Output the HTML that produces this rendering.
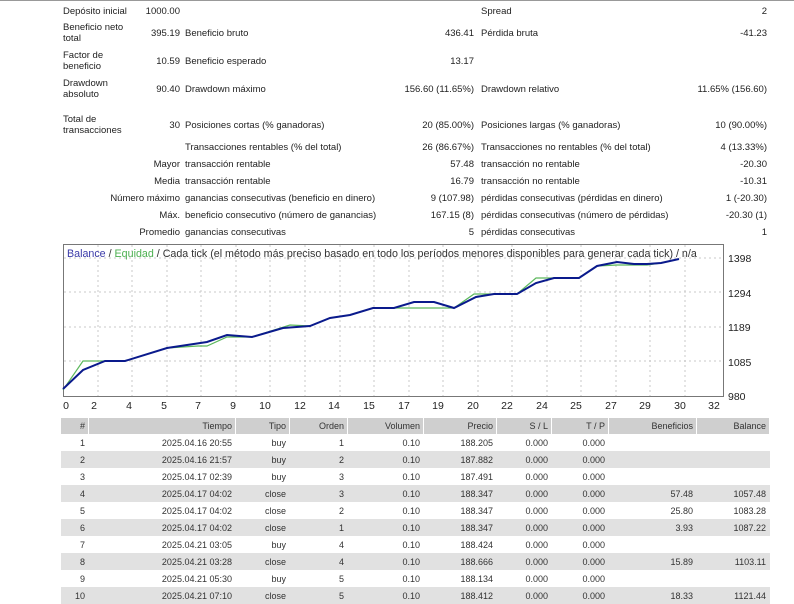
<!DOCTYPE html>
<html><head><meta charset="utf-8"><style>
body{margin:0;width:794px;height:598px;overflow:hidden;background:#fff;font-family:"Liberation Sans",sans-serif;font-size:9.5px;color:#222;position:relative}
.t{position:absolute;white-space:nowrap;line-height:11px}
.r{text-align:right}
table{position:absolute;left:60px;top:418px;border-collapse:separate;border-spacing:1px 0;font-size:9px;color:#333}
td{height:17px;padding:0 3px;text-align:right;white-space:nowrap}
tr.h td{background:#cfcfcf;height:16px}
tr.g td{background:#e1e1e1;box-shadow:1px 0 0 #e1e1e1}
</style></head><body>
<div style="position:absolute;left:0;top:0;width:794px;height:1px;background:#999"></div>
<div class="t" style="left:63px;top:6px">Depósito inicial</div>
<div class="t r" style="left:100px;width:80px;top:6px">1000.00</div>
<div class="t" style="left:481px;top:6px">Spread</div>
<div class="t r" style="left:667px;width:100px;top:6px">2</div>

<div class="t" style="left:63px;top:22px">Beneficio neto<br>total</div>
<div class="t r" style="left:100px;width:80px;top:28px">395.19</div>
<div class="t" style="left:185px;top:28px">Beneficio bruto</div>
<div class="t r" style="left:374px;width:100px;top:28px">436.41</div>
<div class="t" style="left:481px;top:28px">Pérdida bruta</div>
<div class="t r" style="left:667px;width:100px;top:28px">-41.23</div>

<div class="t" style="left:63px;top:50px">Factor de<br>beneficio</div>
<div class="t r" style="left:100px;width:80px;top:56px">10.59</div>
<div class="t" style="left:185px;top:56px">Beneficio esperado</div>
<div class="t r" style="left:374px;width:100px;top:56px">13.17</div>

<div class="t" style="left:63px;top:78px">Drawdown<br>absoluto</div>
<div class="t r" style="left:100px;width:80px;top:84px">90.40</div>
<div class="t" style="left:185px;top:84px">Drawdown máximo</div>
<div class="t r" style="left:334px;width:140px;top:84px">156.60 (11.65%)</div>
<div class="t" style="left:481px;top:84px">Drawdown relativo</div>
<div class="t r" style="left:627px;width:140px;top:84px">11.65% (156.60)</div>

<div class="t" style="left:63px;top:114px">Total de<br>transacciones</div>
<div class="t r" style="left:100px;width:80px;top:120px">30</div>
<div class="t" style="left:185px;top:120px">Posiciones cortas (% ganadoras)</div>
<div class="t r" style="left:334px;width:140px;top:120px">20 (85.00%)</div>
<div class="t" style="left:481px;top:120px">Posiciones largas (% ganadoras)</div>
<div class="t r" style="left:627px;width:140px;top:120px">10 (90.00%)</div>

<div class="t" style="left:185px;top:142px">Transacciones rentables (% del total)</div>
<div class="t r" style="left:334px;width:140px;top:142px">26 (86.67%)</div>
<div class="t" style="left:481px;top:142px">Transacciones no rentables (% del total)</div>
<div class="t r" style="left:627px;width:140px;top:142px">4 (13.33%)</div>

<div class="t r" style="left:60px;width:120px;top:159px">Mayor</div>
<div class="t" style="left:185px;top:159px">transacción rentable</div>
<div class="t r" style="left:334px;width:140px;top:159px">57.48</div>
<div class="t" style="left:481px;top:159px">transacción no rentable</div>
<div class="t r" style="left:627px;width:140px;top:159px">-20.30</div>

<div class="t r" style="left:60px;width:120px;top:176px">Media</div>
<div class="t" style="left:185px;top:176px">transacción rentable</div>
<div class="t r" style="left:334px;width:140px;top:176px">16.79</div>
<div class="t" style="left:481px;top:176px">transacción no rentable</div>
<div class="t r" style="left:627px;width:140px;top:176px">-10.31</div>

<div class="t r" style="left:60px;width:120px;top:193px">Número máximo</div>
<div class="t" style="left:185px;top:193px">ganancias consecutivas (beneficio en dinero)</div>
<div class="t r" style="left:334px;width:140px;top:193px">9 (107.98)</div>
<div class="t" style="left:481px;top:193px">pérdidas consecutivas (pérdidas en dinero)</div>
<div class="t r" style="left:627px;width:140px;top:193px">1 (-20.30)</div>

<div class="t r" style="left:60px;width:120px;top:210px">Máx.</div>
<div class="t" style="left:185px;top:210px">beneficio consecutivo (número de ganancias)</div>
<div class="t r" style="left:334px;width:140px;top:210px">167.15 (8)</div>
<div class="t" style="left:481px;top:210px">pérdidas consecutivas (número de pérdidas)</div>
<div class="t r" style="left:627px;width:140px;top:210px">-20.30 (1)</div>

<div class="t r" style="left:60px;width:120px;top:227px">Promedio</div>
<div class="t" style="left:185px;top:227px">ganancias consecutivas</div>
<div class="t r" style="left:334px;width:140px;top:227px">5</div>
<div class="t" style="left:481px;top:227px">pérdidas consecutivas</div>
<div class="t r" style="left:627px;width:140px;top:227px">1</div>

<svg style="position:absolute;left:0;top:0" width="794" height="418">
<g stroke="#c8c8c8" stroke-dasharray="2,3" stroke-width="1">
<line x1="98" y1="245" x2="98" y2="396"/><line x1="132" y1="245" x2="132" y2="396"/><line x1="167" y1="245" x2="167" y2="396"/><line x1="201" y1="245" x2="201" y2="396"/><line x1="236" y1="245" x2="236" y2="396"/><line x1="270" y1="245" x2="270" y2="396"/><line x1="305" y1="245" x2="305" y2="396"/><line x1="340" y1="245" x2="340" y2="396"/><line x1="374" y1="245" x2="374" y2="396"/><line x1="409" y1="245" x2="409" y2="396"/><line x1="443" y1="245" x2="443" y2="396"/><line x1="478" y1="245" x2="478" y2="396"/><line x1="512" y1="245" x2="512" y2="396"/><line x1="547" y1="245" x2="547" y2="396"/><line x1="581" y1="245" x2="581" y2="396"/><line x1="616" y1="245" x2="616" y2="396"/><line x1="650" y1="245" x2="650" y2="396"/><line x1="685" y1="245" x2="685" y2="396"/>
<line x1="64" y1="258" x2="723" y2="258"/><line x1="64" y1="292" x2="723" y2="292"/><line x1="64" y1="327" x2="723" y2="327"/><line x1="64" y1="361" x2="723" y2="361"/>
</g>
<rect x="63.5" y="244.5" width="660" height="152" fill="none" stroke="#777"/>
<polyline fill="none" stroke="#5cb85c" stroke-width="1.2" points="63,390 83,361 105,361 125,361 167,348 198,346 207,346 227,337 252,337 290,325 310,326 330,318 350,315 373,308 454,308 474,294 494,294 517,294 536,278 554,278 579,278 597,266 617,265 647,265 661,263 679,259"/>
<polyline fill="none" stroke="#0a1a8c" stroke-width="2" points="63,389 83,370 105,361 125,361 167,348 207,342 227,335 252,337 283,328 310,326 330,318 350,315 373,308 394,308 414,302 434,302 454,308 476,297 494,294 517,294 536,283 554,278 579,278 597,266 617,262 634,264 647,264 661,263 679,259"/>
<text x="67" y="257" font-size="10.7" font-family="Liberation Sans,sans-serif"><tspan fill="#3a3aa8">Balance</tspan><tspan fill="#333"> / </tspan><tspan fill="#4caf50">Equidad</tspan><tspan fill="#333"> / Cada tick (el método más preciso basado en todo los períodos menores disponibles para generar cada tick)  / n/a</tspan></text>
<g font-size="10.5" font-family="Liberation Sans,sans-serif" fill="#222">
<text x="728" y="262">1398</text><text x="728" y="297">1294</text><text x="728" y="331">1189</text><text x="728" y="366">1085</text><text x="728" y="400">980</text>
<g text-anchor="middle">
<text x="66" y="409">0</text><text x="94" y="409">2</text><text x="129" y="409">4</text><text x="164" y="409">5</text><text x="198" y="409">7</text><text x="233" y="409">9</text><text x="265" y="409">10</text><text x="300" y="409">12</text><text x="334" y="409">14</text><text x="369" y="409">15</text><text x="404" y="409">17</text><text x="438" y="409">19</text><text x="473" y="409">20</text><text x="507" y="409">22</text><text x="542" y="409">24</text><text x="576" y="409">25</text><text x="611" y="409">27</text><text x="645" y="409">29</text><text x="680" y="409">30</text><text x="714" y="409">32</text>
</g></g>
</svg>

<table>
<tr class="h"><td style="width:21px">#</td><td style="width:140px">Tiempo</td><td style="width:47px">Tipo</td><td style="width:51px">Orden</td><td style="width:69px">Volumen</td><td style="width:66px">Precio</td><td style="width:48px">S / L</td><td style="width:50px">T / P</td><td style="width:81px">Beneficios</td><td style="width:66px">Balance</td></tr>
<tr><td>1</td><td>2025.04.16 20:55</td><td>buy</td><td>1</td><td>0.10</td><td>188.205</td><td>0.000</td><td>0.000</td><td></td><td></td></tr>
<tr class="g"><td>2</td><td>2025.04.16 21:57</td><td>buy</td><td>2</td><td>0.10</td><td>187.882</td><td>0.000</td><td>0.000</td><td></td><td></td></tr>
<tr><td>3</td><td>2025.04.17 02:39</td><td>buy</td><td>3</td><td>0.10</td><td>187.491</td><td>0.000</td><td>0.000</td><td></td><td></td></tr>
<tr class="g"><td>4</td><td>2025.04.17 04:02</td><td>close</td><td>3</td><td>0.10</td><td>188.347</td><td>0.000</td><td>0.000</td><td>57.48</td><td>1057.48</td></tr>
<tr><td>5</td><td>2025.04.17 04:02</td><td>close</td><td>2</td><td>0.10</td><td>188.347</td><td>0.000</td><td>0.000</td><td>25.80</td><td>1083.28</td></tr>
<tr class="g"><td>6</td><td>2025.04.17 04:02</td><td>close</td><td>1</td><td>0.10</td><td>188.347</td><td>0.000</td><td>0.000</td><td>3.93</td><td>1087.22</td></tr>
<tr><td>7</td><td>2025.04.21 03:05</td><td>buy</td><td>4</td><td>0.10</td><td>188.424</td><td>0.000</td><td>0.000</td><td></td><td></td></tr>
<tr class="g"><td>8</td><td>2025.04.21 03:28</td><td>close</td><td>4</td><td>0.10</td><td>188.666</td><td>0.000</td><td>0.000</td><td>15.89</td><td>1103.11</td></tr>
<tr><td>9</td><td>2025.04.21 05:30</td><td>buy</td><td>5</td><td>0.10</td><td>188.134</td><td>0.000</td><td>0.000</td><td></td><td></td></tr>
<tr class="g"><td>10</td><td>2025.04.21 07:10</td><td>close</td><td>5</td><td>0.10</td><td>188.412</td><td>0.000</td><td>0.000</td><td>18.33</td><td>1121.44</td></tr>
</table>
</body></html>
